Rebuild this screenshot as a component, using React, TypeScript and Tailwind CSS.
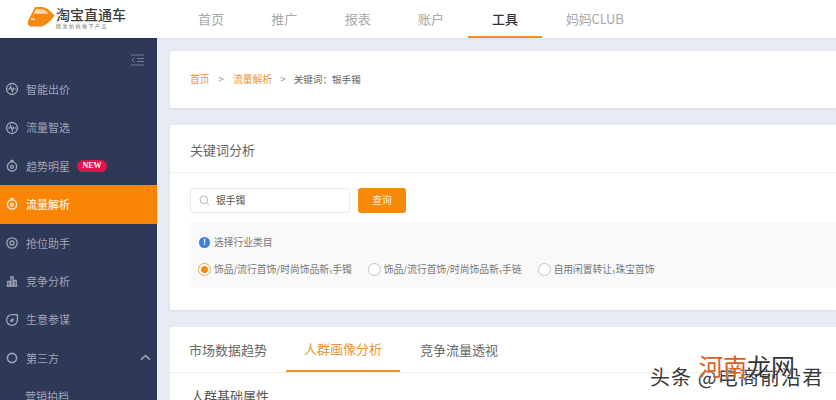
import React from "react";

const font = { fontFamily: '"Noto Sans CJK SC", "Noto Sans", sans-serif' };

function CircleIcon({ kind }: { kind: string }) {
  const common = { fill: "none", stroke: "currentColor", strokeWidth: 1.3 } as const;
  return (
    <svg width="14" height="14" viewBox="0 0 14 14" className="shrink-0">
      {kind === "pulse" && (
        <>
          <circle cx="7" cy="7" r="5.500" {...common} />
          <path d="M2.500 7h2.200l1-2.500 1.600 5 1-3.200.6.700h2.600" {...common} strokeWidth={1.2} />
        </>
      )}
      {kind === "drop" && (
        <>
          <circle cx="7" cy="7.500" r="4.600" {...common} />
          <path d="M5.200 2.400 7 1.200l1.800 1.200" {...common} />
          <circle cx="7" cy="7.800" r="1.500" {...common} />
        </>
      )}
      {kind === "target" && (
        <>
          <circle cx="7" cy="7" r="5.200" {...common} />
          <circle cx="7" cy="7" r="2" {...common} />
        </>
      )}
      {kind === "bars" && <path d="M1.500 12h11M2.800 12V7.500h2.200V12M5.900 12V3h2.200v9M9 12V6.500h2.200V12" {...common} />}
      {kind === "leaf" && (
        <>
          <path d="M7 1.600h5.400V7A5.400 5.400 0 1 1 7 1.600Z" {...common} />
          <path d="m4.800 9.200 1-3 3.300-1-1 3.200Z" fill="currentColor" />
        </>
      )}
      {kind === "ring" && <circle cx="7" cy="7" r="4.600" {...common} strokeWidth={1.6} />}
    </svg>
  );
}

function NavItem({ icon, label, active, badge, chevron }: { icon: string; label: string; active?: boolean; badge?: boolean; chevron?: boolean }) {
  return (
    <div className={`flex h-[38.4px] items-center pl-[5px] pr-[5px] text-[11px] ${active ? "bg-[#fa8505] font-medium text-[#fdf0e0]" : "text-[#a0a5b6]"}`}>
      <CircleIcon kind={icon} />
      <span className="ml-[7px]">{label}</span>
      {badge && (
        <span className="ml-[7px] flex h-[12px] w-[30px] items-center justify-center rounded-full bg-[#e0144c] text-[8px] font-bold text-white" style={{ fontFamily: '"Liberation Serif", serif' }}>
          NEW
        </span>
      )}
      {chevron && (
        <svg width="11" height="7" viewBox="0 0 11 7" className="ml-auto mr-[1px]">
          <path d="M1 5.600 5.500 1.600 10 5.600" fill="none" stroke="#a0a5b6" strokeWidth="1.600" />
        </svg>
      )}
    </div>
  );
}

function Radio({ checked, label }: { checked?: boolean; label: string }) {
  return (
    <div className="flex items-center gap-[3px] whitespace-nowrap">
      <span className={`flex h-[13px] w-[13px] items-center justify-center rounded-full border ${checked ? "border-[#f0a04a]" : "border-[#c4c4c4]"} bg-white`}>
        {checked && <span className="h-[7px] w-[7px] rounded-full bg-[#f58a12]" />}
      </span>
      <span>{label}</span>
    </div>
  );
}

export default function App() {
  const top = ["首页", "推广", "报表", "账户"];
  return (
    <div className="relative flex h-[400px] w-[836px] flex-col overflow-hidden bg-[#e8ebf3]" style={font}>
      <header className="z-10 flex h-[38px] shrink-0 items-stretch bg-white shadow-[0_1px_2px_rgba(0,0,0,0.06)]">
        <div className="flex w-[170px] items-center pl-[27px]">
          <svg width="28" height="22" viewBox="0 0 28 22" className="mb-[5px] shrink-0">
            <path d="M8 1h7c4.500 0 9 4.500 12.500 8.500-3 4.500-8 10-13.500 11H4.500C1.500 20.500.5 18 1 15Z" fill="#f58a12" />
            <path d="M9 3.200h6.500c1.800 0 4 2 6 4.500H6.500Z" fill="#fbd9a8" />
            <rect x="4" y="12.500" width="4" height="1.500" fill="#fde4c0" />
          </svg>
          <div className="ml-[1px] mb-[2px] flex flex-col">
            <span className="text-[14px] font-medium leading-[15px] text-[#3d3d3d]">淘宝直通车</span>
            <span className="mt-[1px] text-[5px] leading-[6px] tracking-[1.500px] text-[#777]">精准拍档做下产品</span>
          </div>
        </div>
        <nav className="flex items-stretch text-[13px] text-[#a8a8a8]">
          {top.map((t, i) => (
            <div key={t} className={`flex items-center ${i === 0 ? "ml-[28px]" : "ml-[47.300px]"}`}>{t}</div>
          ))}
          <div className="ml-[24px] flex w-[74px] items-center justify-center border-b-2 border-[#ee8f1e] pt-[2px] font-medium text-[#333]">工具</div>
          <div className="ml-[24px] flex items-center tracking-[-0.2px]">妈妈CLUB</div>
        </nav>
      </header>

      <div className="flex min-h-0 flex-1">
        <aside className="w-[157px] shrink-0 overflow-hidden bg-[#2e3857]">
          <div className="flex h-[32px] items-start justify-end pr-[13px] pt-[16px]">
            <svg width="14" height="12" viewBox="0 0 14 12">
              <path d="M1 1h13M7 4.500h7M7 7.500h7M1 11h13M4.500 3.500 2 6l2.500 2.500" fill="none" stroke="#6f7892" strokeWidth="1" />
            </svg>
          </div>
          <NavItem icon="pulse" label="智能出价" />
          <NavItem icon="pulse" label="流量智选" />
          <NavItem icon="drop" label="趋势明星" badge />
          <NavItem icon="drop" label="流量解析" active />
          <NavItem icon="target" label="抢位助手" />
          <NavItem icon="bars" label="竞争分析" />
          <NavItem icon="leaf" label="生意参谋" />
          <NavItem icon="ring" label="第三方" chevron />
          <div className="flex h-[38px] items-center pl-[25px] text-[11px] text-[#a0a5b6]">营销拍档</div>
        </aside>

        <main className="min-w-0 flex-1 pl-[13px] pt-[13px]">
          <section className="flex h-[57px] items-center rounded-l-[2px] bg-white pl-[20px] text-[9.800px] text-[#666] shadow-[0_1px_3px_rgba(0,0,0,0.06)]">
            <span className="text-[#f0923a]">首页</span>
            <span className="mx-[9px] text-[#999]">&gt;</span>
            <span className="text-[#f0923a]">流量解析</span>
            <span className="mx-[8px] text-[#999]">&gt;</span>
            <span className="text-[9.600px]">关键词：银手镯</span>
          </section>

          <section className="mt-[17px] h-[185px] rounded-l-[2px] bg-white shadow-[0_1px_3px_rgba(0,0,0,0.08)]">
            <div className="flex h-[48px] items-center border-b border-[#f0f0f0] pl-[20px] pt-[2px] text-[13px] text-[#666]">关键词分析</div>
            <div className="flex items-center pl-[20px] pt-[15px]">
              <div className="flex h-[25px] w-[160px] items-center rounded-[3px] border border-[#ececec] pl-[8px] text-[9.800px] text-[#555]">
                <svg width="11" height="11" viewBox="0 0 11 11">
                  <circle cx="4.800" cy="4.800" r="3.800" fill="none" stroke="#aaa" strokeWidth="0.900" />
                  <path d="m7.600 7.600 2.600 2.600" stroke="#aaa" strokeWidth="0.900" />
                </svg>
                <span className="ml-[6px]">银手镯</span>
              </div>
              <button className="ml-[8px] flex h-[25px] w-[48px] items-center justify-center rounded-[3px] bg-[#f68a0a] text-[9.800px] text-[#fdeeda]">查询</button>
            </div>
            <div className="ml-[20px] mt-[9px] h-[66px] bg-[#f9f9f9] pl-[8px] text-[9.750px] text-[#777]">
              <div className="flex items-center gap-[4px] pl-[1px] pt-[13px] leading-[14px]">
                <span className="flex h-[11px] w-[11px] items-center justify-center rounded-full bg-[#3f7fdc] text-[8px] font-bold leading-none text-white">!</span>
                <span>选择行业类目</span>
              </div>
              <div className="mt-[13px] flex items-center leading-[14px]">
                <Radio checked label="饰品/流行首饰/时尚饰品新₁手镯" />
                <div className="ml-[16px]"><Radio label="饰品/流行首饰/时尚饰品新₁手链" /></div>
                <div className="ml-[16px]"><Radio label="自用闲置转让₁珠宝首饰" /></div>
              </div>
            </div>
          </section>

          <section className="mt-[17px] h-[80px] rounded-l-[2px] bg-white">
            <div className="flex h-[46px] items-stretch border-b border-[#eeeeee] pl-[19px] text-[13px] text-[#666]">
              <div className="flex items-center">市场数据趋势</div>
              <div className="ml-[19px] flex w-[114px] items-center justify-center border-b-2 border-[#f0932b] text-[#f0932b]">人群画像分析</div>
              <div className="ml-[20px] flex items-center">竞争流量透视</div>
            </div>
            <div className="pl-[21px] pt-[14px] text-[13px] leading-[18px] text-[#555]">人群基础属性</div>
          </section>
        </main>
      </div>

      <div className="absolute left-[650px] top-[365px] text-[20px] leading-[24px] tracking-[1.100px] text-[#3a3a3a] [text-shadow:0_0_2px_#fff]">头条 @电商前沿君</div>
      <div className="absolute left-[699px] top-[351px] text-[24px] leading-[30px] [text-shadow:0_0_2px_#fff]">
        <span className="text-[#d9601f]">河南</span>
        <span className="text-[#333]">龙网</span>
      </div>
    </div>
  );
}
